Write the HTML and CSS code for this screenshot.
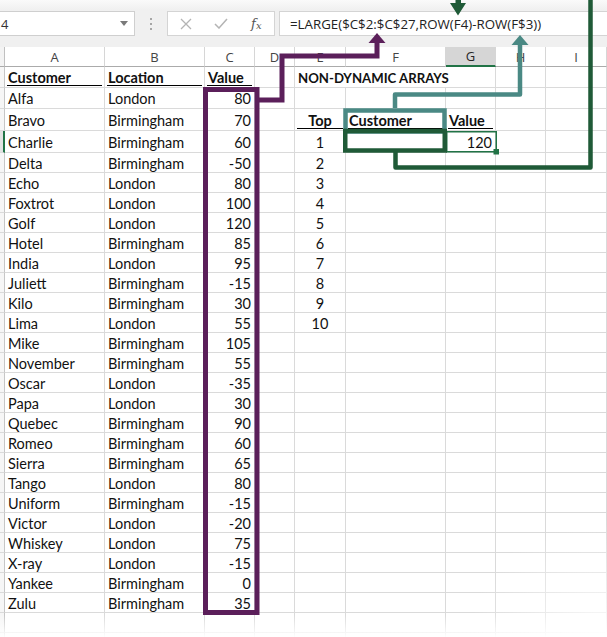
FILE: index.html
```html
<!DOCTYPE html>
<html>
<head>
<meta charset="utf-8">
<title>LARGE non-dynamic arrays</title>
<link rel="stylesheet" href="styles.css">
</head>
<body>
<div class="app">
  <div class="fbar">
    <div class="namebox"><span>4</span><svg class="dd" viewBox="0 0 8 5"><path d="M0 0h8L4 5z" fill="#7a7a7a"/></svg></div>
    <div class="grip"><i></i><i></i><i></i></div>
    <div class="fbtns">
      <span class="ic"><svg width="12" height="12" viewBox="0 0 12 12"><path d="M1 1L11 11M11 1L1 11" stroke="#b4b4b4" stroke-width="1.3" fill="none"/></svg></span>
      <span class="ic"><svg width="14" height="11" viewBox="0 0 14 11"><path d="M1 6l4 4 8-9" stroke="#b4b4b4" stroke-width="1.5" fill="none"/></svg></span>
      <span class="ic fx">f<small>x</small></span>
    </div>
    <div class="formula">=LARGE($C$2:$C$27,ROW(F4)-ROW(F$3))</div>
  </div>

  <div class="sheet">
    <div class="row hrow">
      <div class="hc corner"></div><div class="hc">A</div><div class="hc">B</div><div class="hc">C</div><div class="hc">D</div><div class="hc">E</div><div class="hc">F</div><div class="hc sel">G</div><div class="hc">H</div><div class="hc">I</div>
    </div>
    <div class="row h21">
      <div class="rh"></div><div class="c b ul">Customer</div><div class="c b ul">Location</div><div class="c b ul">Value</div><div class="c"></div><div class="c b span3 title">NON-DYNAMIC ARRAYS</div><div class="c"></div><div class="c"></div>
    </div>
    <div class="row h21">
      <div class="rh"></div><div class="c">Alfa</div><div class="c">London</div><div class="c num">80</div><div class="c"></div><div class="c"></div><div class="c"></div><div class="c"></div><div class="c"></div><div class="c"></div>
    </div>
    <div class="row h22">
      <div class="rh"></div><div class="c">Bravo</div><div class="c">Birmingham</div><div class="c num">70</div><div class="c"></div><div class="c b ctr ul">Top</div><div class="c b ul">Customer</div><div class="c b ul">Value</div><div class="c"></div><div class="c"></div>
    </div>
    <div class="row h22">
      <div class="rh rsel"></div><div class="c">Charlie</div><div class="c">Birmingham</div><div class="c num">60</div><div class="c"></div><div class="c ctr">1</div><div class="c"></div><div class="c num">120</div><div class="c"></div><div class="c"></div>
    </div>
    <div class="row">
      <div class="rh"></div><div class="c">Delta</div><div class="c">Birmingham</div><div class="c num">-50</div><div class="c"></div><div class="c ctr">2</div><div class="c"></div><div class="c"></div><div class="c"></div><div class="c"></div>
    </div>
    <div class="row">
      <div class="rh"></div><div class="c">Echo</div><div class="c">London</div><div class="c num">80</div><div class="c"></div><div class="c ctr">3</div><div class="c"></div><div class="c"></div><div class="c"></div><div class="c"></div>
    </div>
    <div class="row">
      <div class="rh"></div><div class="c">Foxtrot</div><div class="c">London</div><div class="c num">100</div><div class="c"></div><div class="c ctr">4</div><div class="c"></div><div class="c"></div><div class="c"></div><div class="c"></div>
    </div>
    <div class="row">
      <div class="rh"></div><div class="c">Golf</div><div class="c">London</div><div class="c num">120</div><div class="c"></div><div class="c ctr">5</div><div class="c"></div><div class="c"></div><div class="c"></div><div class="c"></div>
    </div>
    <div class="row">
      <div class="rh"></div><div class="c">Hotel</div><div class="c">Birmingham</div><div class="c num">85</div><div class="c"></div><div class="c ctr">6</div><div class="c"></div><div class="c"></div><div class="c"></div><div class="c"></div>
    </div>
    <div class="row">
      <div class="rh"></div><div class="c">India</div><div class="c">London</div><div class="c num">95</div><div class="c"></div><div class="c ctr">7</div><div class="c"></div><div class="c"></div><div class="c"></div><div class="c"></div>
    </div>
    <div class="row">
      <div class="rh"></div><div class="c">Juliett</div><div class="c">Birmingham</div><div class="c num">-15</div><div class="c"></div><div class="c ctr">8</div><div class="c"></div><div class="c"></div><div class="c"></div><div class="c"></div>
    </div>
    <div class="row">
      <div class="rh"></div><div class="c">Kilo</div><div class="c">Birmingham</div><div class="c num">30</div><div class="c"></div><div class="c ctr">9</div><div class="c"></div><div class="c"></div><div class="c"></div><div class="c"></div>
    </div>
    <div class="row">
      <div class="rh"></div><div class="c">Lima</div><div class="c">London</div><div class="c num">55</div><div class="c"></div><div class="c ctr">10</div><div class="c"></div><div class="c"></div><div class="c"></div><div class="c"></div>
    </div>
    <div class="row">
      <div class="rh"></div><div class="c">Mike</div><div class="c">Birmingham</div><div class="c num">105</div><div class="c"></div><div class="c"></div><div class="c"></div><div class="c"></div><div class="c"></div><div class="c"></div>
    </div>
    <div class="row">
      <div class="rh"></div><div class="c">November</div><div class="c">Birmingham</div><div class="c num">55</div><div class="c"></div><div class="c"></div><div class="c"></div><div class="c"></div><div class="c"></div><div class="c"></div>
    </div>
    <div class="row">
      <div class="rh"></div><div class="c">Oscar</div><div class="c">London</div><div class="c num">-35</div><div class="c"></div><div class="c"></div><div class="c"></div><div class="c"></div><div class="c"></div><div class="c"></div>
    </div>
    <div class="row">
      <div class="rh"></div><div class="c">Papa</div><div class="c">London</div><div class="c num">30</div><div class="c"></div><div class="c"></div><div class="c"></div><div class="c"></div><div class="c"></div><div class="c"></div>
    </div>
    <div class="row">
      <div class="rh"></div><div class="c">Quebec</div><div class="c">Birmingham</div><div class="c num">90</div><div class="c"></div><div class="c"></div><div class="c"></div><div class="c"></div><div class="c"></div><div class="c"></div>
    </div>
    <div class="row">
      <div class="rh"></div><div class="c">Romeo</div><div class="c">Birmingham</div><div class="c num">60</div><div class="c"></div><div class="c"></div><div class="c"></div><div class="c"></div><div class="c"></div><div class="c"></div>
    </div>
    <div class="row">
      <div class="rh"></div><div class="c">Sierra</div><div class="c">Birmingham</div><div class="c num">65</div><div class="c"></div><div class="c"></div><div class="c"></div><div class="c"></div><div class="c"></div><div class="c"></div>
    </div>
    <div class="row">
      <div class="rh"></div><div class="c">Tango</div><div class="c">London</div><div class="c num">80</div><div class="c"></div><div class="c"></div><div class="c"></div><div class="c"></div><div class="c"></div><div class="c"></div>
    </div>
    <div class="row">
      <div class="rh"></div><div class="c">Uniform</div><div class="c">Birmingham</div><div class="c num">-15</div><div class="c"></div><div class="c"></div><div class="c"></div><div class="c"></div><div class="c"></div><div class="c"></div>
    </div>
    <div class="row">
      <div class="rh"></div><div class="c">Victor</div><div class="c">London</div><div class="c num">-20</div><div class="c"></div><div class="c"></div><div class="c"></div><div class="c"></div><div class="c"></div><div class="c"></div>
    </div>
    <div class="row">
      <div class="rh"></div><div class="c">Whiskey</div><div class="c">London</div><div class="c num">75</div><div class="c"></div><div class="c"></div><div class="c"></div><div class="c"></div><div class="c"></div><div class="c"></div>
    </div>
    <div class="row">
      <div class="rh"></div><div class="c">X-ray</div><div class="c">London</div><div class="c num">-15</div><div class="c"></div><div class="c"></div><div class="c"></div><div class="c"></div><div class="c"></div><div class="c"></div>
    </div>
    <div class="row">
      <div class="rh"></div><div class="c">Yankee</div><div class="c">Birmingham</div><div class="c num">0</div><div class="c"></div><div class="c"></div><div class="c"></div><div class="c"></div><div class="c"></div><div class="c"></div>
    </div>
    <div class="row">
      <div class="rh"></div><div class="c">Zulu</div><div class="c">Birmingham</div><div class="c num">35</div><div class="c"></div><div class="c"></div><div class="c"></div><div class="c"></div><div class="c"></div><div class="c"></div>
    </div>
    <div class="row">
      <div class="rh"></div><div class="c"></div><div class="c"></div><div class="c"></div><div class="c"></div><div class="c"></div><div class="c"></div><div class="c"></div><div class="c"></div><div class="c"></div>
    </div>
    <div class="row">
      <div class="rh"></div><div class="c"></div><div class="c"></div><div class="c"></div><div class="c"></div><div class="c"></div><div class="c"></div><div class="c"></div><div class="c"></div><div class="c"></div>
    </div>
  </div>

  <svg class="notes" width="607" height="637" viewBox="0 0 607 637">
    <rect x="446.75" y="131.75" width="49.5" height="20" fill="none" stroke="#217346" stroke-width="1.5"/>
    <rect x="493.5" y="149" width="5.5" height="5.5" fill="#217346"/>
    <rect x="205.5" y="89.5" width="51.5" height="523" fill="none" stroke="#5b1f5a" stroke-width="5"/>
    <path d="M258 100H282V56H377V42" fill="none" stroke="#5b1f5a" stroke-width="5" stroke-linejoin="miter"/>
    <path d="M368.5 43H385.5L377 33Z" fill="#5b1f5a"/>
    <rect x="345.5" y="110.5" width="99" height="21" fill="none" stroke="#4a8984" stroke-width="4.5"/>
    <path d="M395 108V94.5H520V44" fill="none" stroke="#4a8984" stroke-width="4.5" stroke-linejoin="round"/>
    <path d="M511.5 45H528.5L520 35Z" fill="#4a8984"/>
    <rect x="345.25" y="131" width="99.5" height="19.5" fill="none" stroke="#1f5a37" stroke-width="4.5"/>
    <path d="M395.5 152V167.5H590.5V-2" fill="none" stroke="#1f5a37" stroke-width="4.5" stroke-linejoin="round"/>
    <path d="M455.5 0H461V3H466L458 15.5L450 3H455.5Z" fill="#1f5a37"/>
  </svg>
  <div class="fade"></div>
  <div class="fade-r"></div>
</div>
</body>
</html>
```

FILE: styles.css
```css
* { box-sizing: border-box; margin: 0; padding: 0; }
html, body { background: #fff; }
body {
  width: 607px;
  height: 637px;
  overflow: hidden;
  font-family: Lato, "Liberation Sans", sans-serif;
  color: #000;
}
.app {
  position: relative;
  width: 607px;
  height: 637px;
  overflow: hidden;
}

/* formula bar */
.fbar {
  height: 47px;
  background: linear-gradient(#fafafa 0, #f0f0f0 10px, #f0f0f0 100%);
  display: flex;
  align-items: flex-start;
  padding-top: 11px;
  font-family: "Open Sans", "Noto Sans", sans-serif;
}
.namebox {
  width: 135px;
  height: 25px;
  background: #fff;
  border: 1px solid #cfcfcf;
  border-left: none;
  display: flex;
  align-items: center;
  justify-content: space-between;
  padding: 0 6px 0 1px;
  font-size: 13px;
  color: #333;
}
.dd { width: 8px; height: 5px; display: block; }
.grip {
  width: 32px;
  height: 25px;
  display: flex;
  flex-direction: column;
  align-items: center;
  justify-content: center;
  gap: 3px;
}
.grip i { display: block; width: 2px; height: 2px; background: #a6a6a6; }
.fbtns {
  width: 108px;
  height: 25px;
  background: #fff;
  border: 1px solid #d4d4d4;
  display: flex;
  align-items: center;
}
.fbtns .ic {
  width: 36px;
  display: flex;
  justify-content: center;
  align-items: center;
}
.fx {
  font-family: "DejaVu Serif", "Liberation Serif", serif;
  font-style: italic;
  font-size: 13px;
  color: #555;
}
.fx small { font-size: 10px; margin-top: 3px; }
.formula {
  flex: 1;
  margin-left: 4px;
  height: 25px;
  background: #fff;
  border: 1px solid #d4d4d4;
  border-right: none;
  padding-left: 10px;
  display: flex;
  align-items: center;
  font-size: 13.3px;
  color: #222;
  white-space: nowrap;
}

/* sheet */
.row {
  display: grid;
  grid-template-columns: 5px 100px 100px 50px 40px 51px 100px 50px 50px 61px;
  height: 20px;
}
.h21 { height: 21px; }
.h22 { height: 22px; }

.hc {
  border-right: 1px solid #d6d6d6;
  border-bottom: 1px solid #ababab;
  display: flex;
  align-items: center;
  justify-content: center;
  font-family: "Open Sans", "Noto Sans", sans-serif;
  font-size: 13px;
  color: #444;
  background: #fff;
}
.hc.corner { background: #f3f3f3; border-right-color: #c0c0c0; }
.hc.sel {
  background: #d6d6d6;
  border-bottom: 2px solid #217346;
  color: #262626;
}

.rh {
  background: #f6f6f6;
  border-right: 1px solid #c6c6c6;
  border-bottom: 1px solid #dadada;
}
.rh.rsel { border-right: 2px solid #217346; background: #e2e2e2; }

.c {
  border-right: 1px solid #dadada;
  border-bottom: 1px solid #dadada;
  display: flex;
  align-items: center;
  padding: 1px 3px 0;
  white-space: nowrap;
  font-size: 14.5px;
  color: #111;
}
.c.b { font-weight: 700; }
.c.num { justify-content: flex-end; }
.c.ctr { justify-content: center; }
.c.span3 { grid-column: span 3; }
.c.title { font-size: 13.2px; }
.c.ul {
  background: linear-gradient(#000, #000) no-repeat;
  background-size: calc(100% - 4px) 1px;
  background-position: 2px calc(100% - 1px);
}

/* annotations */
.notes {
  position: absolute;
  left: 0;
  top: 0;
  pointer-events: none;
}
.fade {
  position: absolute;
  left: 0;
  right: 0;
  bottom: 0;
  height: 22px;
  background: linear-gradient(rgba(255,255,255,0), rgba(255,255,255,0.95));
}
.fade-r {
  position: absolute;
  right: 0;
  bottom: 0;
  width: 140px;
  height: 120px;
  background: radial-gradient(ellipse at 100% 100%, rgba(255,255,255,0.9), rgba(255,255,255,0) 70%);
}
```
